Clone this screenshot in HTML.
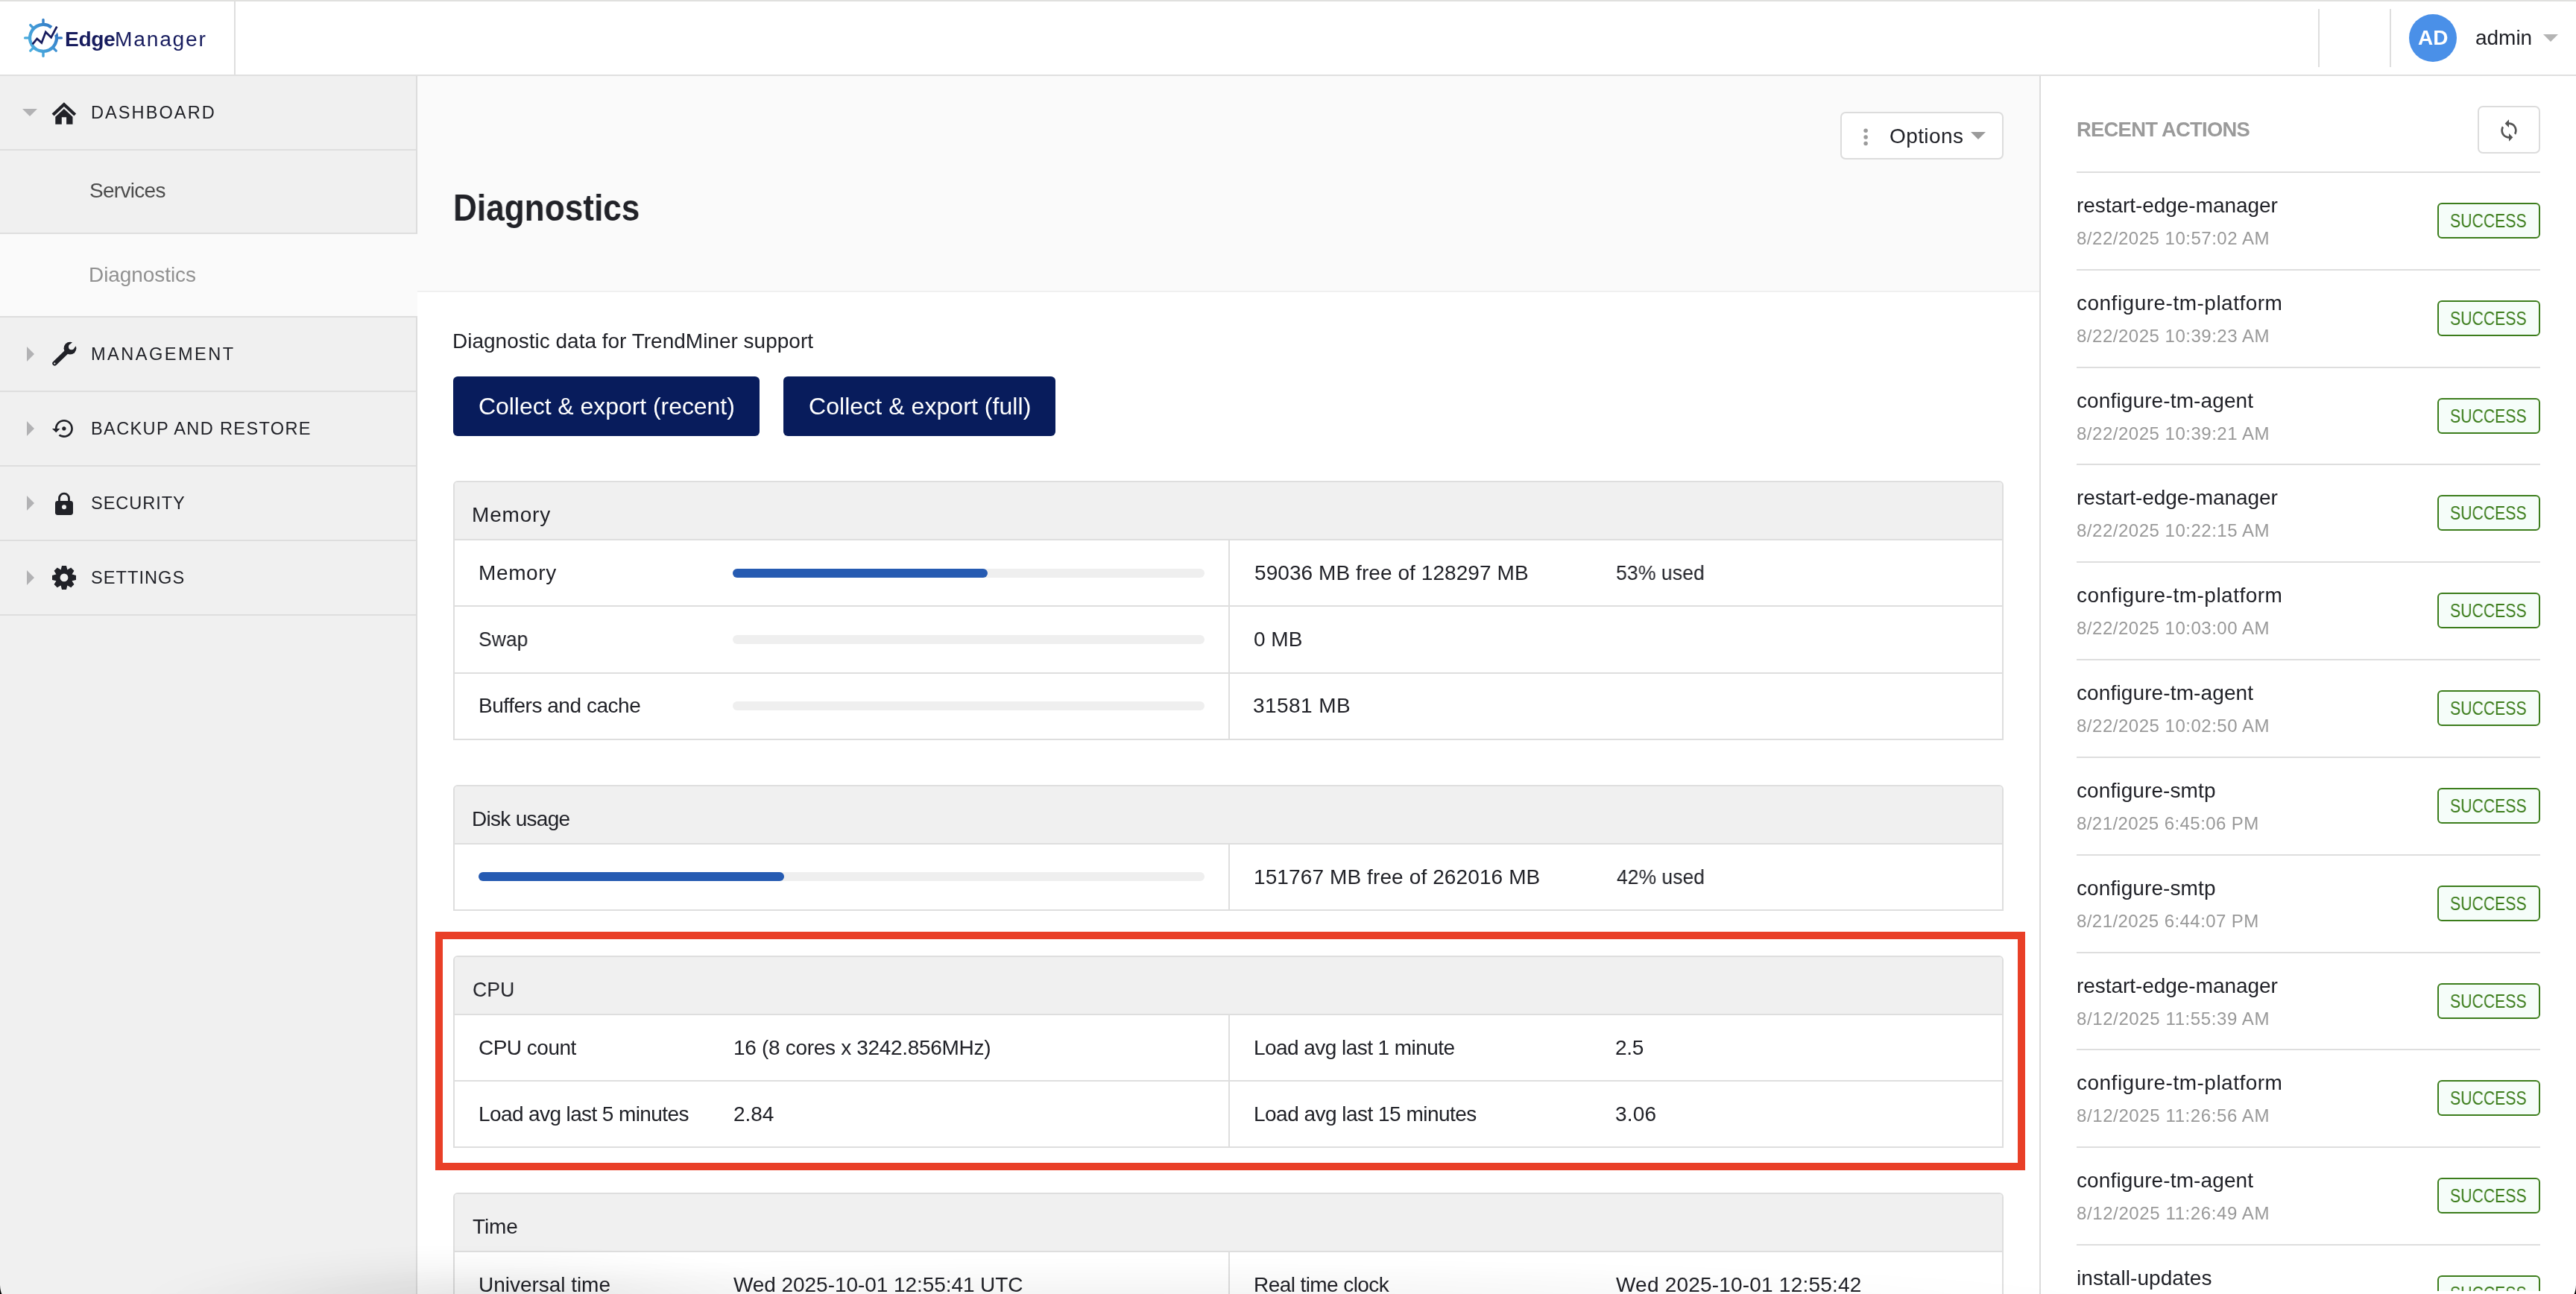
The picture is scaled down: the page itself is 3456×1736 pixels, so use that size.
<!DOCTYPE html>
<html lang="en">
<head>
<meta charset="utf-8">
<title>EdgeManager - Diagnostics</title>
<style>

html,body{margin:0;padding:0;background:#fff}
html{width:3456px;height:1736px;overflow:hidden}
body{width:3456px;height:1736px;overflow:hidden;position:relative;font-family:"Liberation Sans", sans-serif;color:#212228}
*{box-sizing:border-box}
.abs,.t,svg{position:absolute}
.t{will-change:transform;white-space:pre;line-height:1;margin:0;padding:0;font-weight:400;font-style:normal;text-decoration:none;transform-origin:0 0}
ul,li,h1,h2,h3,p{margin:0;padding:0;list-style:none}
button{margin:0;padding:0;font:inherit;color:inherit;display:block}
#topline{left:0;top:0;width:3456px;height:2px;background:#e0e0de}
#header{left:0;top:2px;width:3456px;height:100px;background:#fff;border-bottom:2px solid #e0e0e0}
.vsep{width:2px;background:#dedede}
.avatar{left:3232px;top:19px;width:64px;height:64px;border-radius:50%;background:#4a90e8}
#sidebar{left:0;top:102px;width:560px;height:1634px;background:#f0f0f0;border-right:2px solid #dcdcdc}
.nav{left:0;width:558px;border-bottom:2px solid #dedede}
.nav.active{width:560px;background:#fafafa}
#main{left:560px;top:102px;width:2176px;height:1634px;background:#fff}
#pagehead{left:0;top:0;width:2176px;height:290px;background:#fafafa;border-bottom:2px solid #f0f0f0}
.btn{background:#081c5c;border:0;border-radius:6px;height:80px;top:505px}
.obtn{background:#fff;border:2px solid #dcdcdc;border-radius:7px}
.panel{left:608px;width:2080px;border:2px solid #dedede;border-radius:6px 6px 0 0;background:#fff;overflow:hidden}
.phead{left:0;top:0;width:2076px;height:78px;background:#f0f0f0;border-bottom:2px solid #dedede}
.hline{left:0;width:2076px;height:2px;background:#dedede}
.vline{left:1038px;width:2px;background:#dedede}
.track{height:12px;border-radius:6px;background:#efefef}
.fill{height:12px;border-radius:6px;background:#265bb2;left:0;top:0}
#redbox{left:584px;top:1250px;width:2133px;height:320px;border:10px solid #e93f27}
#aside{left:2736px;top:102px;width:720px;height:1634px;background:#fff;border-left:2px solid #dcdcdc}
#clip{left:0;top:0;width:3456px;height:1732px;overflow:hidden}
.rline{left:2786px;width:622px;height:2px;background:#dedede}
.badge{left:3270px;width:138px;height:48px;border:2px solid #3c7d1c;border-radius:6px;background:#f5fdf9}
#shade{left:0;top:1636px;width:3456px;height:100px;background:radial-gradient(ellipse 460px 78px at 640px 110px,rgba(0,0,0,0.085) 0%,rgba(0,0,0,0.053) 35%,rgba(0,0,0,0.023) 65%,rgba(0,0,0,0.007) 85%,rgba(0,0,0,0.000) 100%),radial-gradient(ellipse 1400px 62px at 1500px 110px,rgba(0,0,0,0.050) 0%,rgba(0,0,0,0.031) 35%,rgba(0,0,0,0.014) 65%,rgba(0,0,0,0.004) 85%,rgba(0,0,0,0.000) 100%)}

</style>
</head>
<body>
<header>
<div class="abs" id="topline"></div>
<div class="abs" id="header"></div>
<a class="brand" title="EdgeManager">
<svg style="left:0;top:0" width="320" height="102" viewBox="0 0 320 102"><defs><linearGradient id="lg" gradientUnits="userSpaceOnUse" x1="32" y1="70" x2="84" y2="34"><stop offset="0" stop-color="#52b8e2"/><stop offset=".55" stop-color="#3f94d4"/><stop offset="1" stop-color="#2b68ba"/></linearGradient></defs><g fill="none" stroke="url(#lg)" stroke-linecap="butt"><path d="M69.02 36.79A17.9 17.9 0 1 0 75.37 46.57" stroke-width="4.3"/></g><path d="M77.01 43.22L73.65 48.70L77.81 48.12Z" fill="#2d6cbc"/><g stroke="url(#lg)" stroke-width="3.4" stroke-linecap="round" fill="none"><path d="M58.00 31.50L58.00 26.50"/><path d="M44.28 37.18L40.75 33.65"/><path d="M38.60 50.90L33.60 50.90"/><path d="M44.28 64.62L40.75 68.15"/><path d="M58.00 70.30L58.00 75.30"/><path d="M71.72 64.62L75.25 68.15"/><path d="M77.40 50.90L82.40 50.90"/></g><path d="M43.6 59.3L49.7 51.9L55.8 57.4L61.3 43.0L68.6 50.2L76.3 35.6" fill="none" stroke="#171c5e" stroke-width="2.8" stroke-linejoin="miter" stroke-miterlimit="6"/></svg>
<b class="t" style="left:86.80px;top:38.33px;font-size:28.2px;color:#171c5e;letter-spacing:-0.412px;font-weight:700">Edge</b>
<span class="t" style="left:154.40px;top:38.33px;font-size:28.2px;color:#171c5e;letter-spacing:1.773px">Manager</span>
</a>
<div class="abs vsep" style="left:314px;top:2px;height:98px"></div>
<div class="abs vsep" style="left:3110px;top:12px;height:78px"></div>
<div class="abs vsep" style="left:3206px;top:12px;height:78px"></div>
<div class="usermenu">
<div class="abs avatar"></div>
<span class="t" style="left:3244.20px;top:37.00px;font-size:28px;color:#ffffff;letter-spacing:-0.021px;font-weight:700">AD</span>
<span class="t" style="left:3320.60px;top:36.80px;font-size:28px;color:#212228;letter-spacing:-0.022px">admin</span>
<svg style="left:3412px;top:46px" width="20" height="10" viewBox="0 0 20 10"><path d="M0 0H20L10 10Z" fill="#b4b4b4"/></svg>
</div>
</header>
<nav>
<div class="abs" id="sidebar"></div>
<ul>
<li><div class="abs nav" style="top:102px;height:100px"></div><svg style="left:30px;top:146px" width="20" height="10" viewBox="0 0 20 10"><path d="M0 0H20L10 10Z" fill="#b2b2b4"/></svg><svg style="left:60px;top:130px" width="60" height="44" viewBox="60 130 60 44"><g fill="#212228"><path d="M85.9 137.2L102.2 152.6L99.3 155.4L85.9 143.0L72.5 155.4L69.6 152.6Z"/><path d="M85.9 146.0L97.5 156.7V166.8H89.1V157.2H82.8V166.8H74.3V156.7Z"/></g></svg><a class="t" style="left:121.70px;top:139.52px;font-size:23.6px;color:#212228;letter-spacing:2.036px">DASHBOARD</a>
<ul>
<li><div class="abs nav" style="top:202px;height:112px"></div><a class="t" style="left:119.90px;top:242.40px;font-size:28px;color:#4d4d4d;letter-spacing:-0.709px">Services</a></li>
<li><div class="abs nav active" style="top:314px;height:112px"></div><a class="t" style="left:119.00px;top:354.80px;font-size:28px;color:#919191;letter-spacing:-0.073px">Diagnostics</a></li>
</ul></li>
<li><div class="abs nav" style="top:426px;height:100px"></div><svg style="left:36px;top:465px" width="10" height="20" viewBox="0 0 10 20"><path d="M0 0L10 10L0 20Z" fill="#b2b2b4"/></svg><svg style="left:60px;top:452px" width="60" height="46" viewBox="60 452 60 46"><path d="M73.4 487.5L91.5 470.0" stroke="#212228" stroke-width="6.2" stroke-linecap="round" fill="none"/><circle cx="94.0" cy="467.2" r="8.4" fill="#212228"/><circle cx="95.9" cy="465.3" r="3.9" fill="#f0f0f0"/><path d="M95.9 465.3L104.5 456.7" stroke="#f0f0f0" stroke-width="7.2" fill="none"/><circle cx="73.3" cy="487.6" r="1.1" fill="#f0f0f0"/></svg><a class="t" style="left:121.70px;top:463.72px;font-size:23.6px;color:#212228;letter-spacing:2.457px">MANAGEMENT</a></li>
<li><div class="abs nav" style="top:526px;height:100px"></div><svg style="left:36px;top:565px" width="10" height="20" viewBox="0 0 10 20"><path d="M0 0L10 10L0 20Z" fill="#b2b2b4"/></svg><svg style="left:60px;top:552px" width="60" height="46" viewBox="60 552 60 46"><g transform="translate(69.9 558.9) scale(1.3333)"><path fill="#212228" d="M14 12c0-1.1-.9-2-2-2s-2 .9-2 2 .9 2 2 2 2-.9 2-2zm-2-9c-4.970 0-9 4.030-9 9H0l4 4 4-4H5c0-3.870 3.130-7 7-7s7 3.130 7 7-3.130 7-7 7c-1.510 0-2.910-.49-4.060-1.300l-1.420 1.440C8.040 20.300 9.940 21 12 21c4.970 0 9-4.030 9-9s-4.030-9-9-9z"/></g></svg><a class="t" style="left:122.20px;top:563.72px;font-size:23.6px;color:#212228;letter-spacing:1.339px">BACKUP AND RESTORE</a></li>
<li><div class="abs nav" style="top:626px;height:100px"></div><svg style="left:36px;top:665px" width="10" height="20" viewBox="0 0 10 20"><path d="M0 0L10 10L0 20Z" fill="#b2b2b4"/></svg><svg style="left:60px;top:652px" width="60" height="46" viewBox="60 652 60 46"><rect x="74" y="672" width="24" height="19" rx="3.4" fill="#212228"/><path d="M79.5 673.5V668.7A6.5 6.5 0 0 1 92.5 668.7V673.5" fill="none" stroke="#212228" stroke-width="2.8"/><circle cx="86" cy="680.2" r="3" fill="#f0f0f0"/></svg><a class="t" style="left:122.20px;top:663.72px;font-size:23.6px;color:#212228;letter-spacing:0.935px">SECURITY</a></li>
<li><div class="abs nav" style="top:726px;height:100px"></div><svg style="left:36px;top:765px" width="10" height="20" viewBox="0 0 10 20"><path d="M0 0L10 10L0 20Z" fill="#b2b2b4"/></svg><svg style="left:60px;top:752px" width="60" height="46" viewBox="60 752 60 46"><path fill="#212228" fill-rule="evenodd" d="M81.70 764.13L83.00 758.90L89.00 758.90L90.30 764.13A11.6 11.6 0 0 1 90.58 764.24L95.19 761.46L99.44 765.71L96.66 770.32A11.6 11.6 0 0 1 96.77 770.60L102.00 771.90L102.00 777.90L96.77 779.20A11.6 11.6 0 0 1 96.66 779.48L99.44 784.09L95.19 788.34L90.58 785.56A11.6 11.6 0 0 1 90.30 785.67L89.00 790.90L83.00 790.90L81.70 785.67A11.6 11.6 0 0 1 81.42 785.56L76.81 788.34L72.56 784.09L75.34 779.48A11.6 11.6 0 0 1 75.23 779.20L70.00 777.90L70.00 771.90L75.23 770.60A11.6 11.6 0 0 1 75.34 770.32L72.56 765.71L76.81 761.46L81.42 764.24A11.6 11.6 0 0 1 81.70 764.13ZM91.4 774.9A5.4 5.4 0 1 0 80.6 774.9A5.4 5.4 0 1 0 91.4 774.9Z"/></svg><a class="t" style="left:122.20px;top:763.72px;font-size:23.6px;color:#212228;letter-spacing:1.022px">SETTINGS</a></li>
</ul>
</nav>
<main>
<div class="abs" id="main"><div class="abs" id="pagehead"></div></div>
<div class="pagehead">
<button class="abs obtn" style="left:2469px;top:150px;width:219px;height:64px">
<svg style="left:28px;top:18px" width="8" height="28" viewBox="0 0 8 28"><g fill="#9b9b9b"><circle cx="4.1" cy="5.3" r="2.75"/><circle cx="4.1" cy="13.9" r="2.75"/><circle cx="4.1" cy="22.5" r="2.75"/></g></svg>
<span class="t" style="left:64.30px;top:16.80px;font-size:28px;color:#212228;letter-spacing:0.401px">Options</span>
<svg style="left:173px;top:25px" width="20" height="10" viewBox="0 0 20 10"><path d="M0 0H20L10 10Z" fill="#9b9b9b"/></svg>
</button>
<h1 class="t" style="left:607.55px;top:253.58px;font-size:50px;color:#212228;font-weight:700;transform:scaleX(0.8834)">Diagnostics</h1>
</div>
<section class="export">
<p class="t" style="left:607.20px;top:443.90px;font-size:28px;color:#212228;letter-spacing:-0.001px">Diagnostic data for TrendMiner support</p>
<button class="abs btn" style="left:608px;width:411px"><span class="t" style="left:33.60px;top:23.91px;font-size:32px;color:#ffffff;letter-spacing:-0.048px">Collect &amp; export (recent)</span></button>
<button class="abs btn" style="left:1051px;width:365px"><span class="t" style="left:33.70px;top:23.91px;font-size:32px;color:#ffffff;letter-spacing:0.062px">Collect &amp; export (full)</span></button>
</section>
<section class="abs panel" style="top:645px;height:348px"><div class="abs phead"></div><h3 class="t" style="left:22.60px;top:30.30px;font-size:28px;color:#212228;letter-spacing:0.817px">Memory</h3><div class="abs hline" style="top:165px"></div><div class="abs hline" style="top:255px"></div><div class="abs vline" style="top:78px;height:266px"></div><div class="abs track" style="left:373px;top:116px;width:633px"><div class="abs fill" style="width:341.7px"></div></div><div class="abs track" style="left:373px;top:205px;width:633px"></div><div class="abs track" style="left:373px;top:294px;width:633px"></div><span class="t" style="left:31.90px;top:108.20px;font-size:28px;color:#212228;letter-spacing:0.617px">Memory</span><span class="t" style="left:1072.60px;top:108.20px;font-size:28px;color:#212228;letter-spacing:0.071px">59036 MB free of 128297 MB</span><span class="t" style="left:1557.95px;top:108.20px;font-size:28px;color:#212228;transform:scaleX(0.9536)">53% used</span><span class="t" style="left:31.75px;top:197.20px;font-size:28px;color:#212228;transform:scaleX(0.9464)">Swap</span><span class="t" style="left:1071.90px;top:197.20px;font-size:28px;color:#212228;letter-spacing:0.008px">0 MB</span><span class="t" style="left:32.20px;top:286.40px;font-size:28px;color:#212228;letter-spacing:-0.464px">Buffers and cache</span><span class="t" style="left:1071.40px;top:286.40px;font-size:28px;color:#212228;letter-spacing:0.419px">31581 MB</span></section>
<section class="abs panel" style="top:1053px;height:169px"><div class="abs phead"></div><h3 class="t" style="left:23.00px;top:30.30px;font-size:28px;color:#212228;letter-spacing:-0.715px">Disk usage</h3><div class="abs vline" style="top:78px;height:87px"></div><div class="abs track" style="left:32px;top:115px;width:974px"><div class="abs fill" style="width:409.8px"></div></div><span class="t" style="left:1071.70px;top:108.30px;font-size:28px;color:#212228;letter-spacing:0.112px">151767 MB free of 262016 MB</span><span class="t" style="left:1558.80px;top:108.30px;font-size:28px;color:#212228;transform:scaleX(0.9466)">42% used</span></section>
<div class="abs" id="redbox"></div>
<section class="abs panel" style="top:1282px;height:258px"><div class="abs phead"></div><h3 class="t" style="left:23.75px;top:30.10px;font-size:28px;color:#212228;transform:scaleX(0.9508)">CPU</h3><div class="abs hline" style="top:165px"></div><div class="abs vline" style="top:78px;height:176px"></div><span class="t" style="left:31.90px;top:108.20px;font-size:28px;color:#212228;letter-spacing:-0.514px">CPU count</span><span class="t" style="left:374.00px;top:108.20px;font-size:28px;color:#212228;letter-spacing:-0.310px">16 (8 cores x 3242.856MHz)</span><span class="t" style="left:1072.10px;top:108.20px;font-size:28px;color:#212228;letter-spacing:-0.555px">Load avg last 1 minute</span><span class="t" style="left:1557.40px;top:108.20px;font-size:28px;color:#212228;letter-spacing:-0.276px">2.5</span><span class="t" style="left:32.20px;top:197.10px;font-size:28px;color:#212228;letter-spacing:-0.606px">Load avg last 5 minutes</span><span class="t" style="left:373.80px;top:197.10px;font-size:28px;color:#212228;letter-spacing:-0.075px">2.84</span><span class="t" style="left:1072.10px;top:197.10px;font-size:28px;color:#212228;letter-spacing:-0.522px">Load avg last 15 minutes</span><span class="t" style="left:1557.30px;top:197.10px;font-size:28px;color:#212228;letter-spacing:0.225px">3.06</span></section>
<section class="abs panel" style="top:1600px;height:136px;border-bottom:0"><div class="abs phead"></div><h3 class="t" style="left:24.20px;top:30.10px;font-size:28px;color:#212228;letter-spacing:-0.103px">Time</h3><div class="abs vline" style="top:78px;height:58px"></div><span class="t" style="left:31.90px;top:107.60px;font-size:28px;color:#212228;letter-spacing:-0.031px">Universal time</span><span class="t" style="left:374.10px;top:107.60px;font-size:28px;color:#212228;letter-spacing:-0.063px">Wed 2025-10-01 12:55:41 UTC</span><span class="t" style="left:1072.10px;top:107.60px;font-size:28px;color:#212228;letter-spacing:-0.574px">Real time clock</span><span class="t" style="left:1558.30px;top:107.60px;font-size:28px;color:#212228;letter-spacing:0.201px">Wed 2025-10-01 12:55:42</span></section>
</main>
<aside>
<div class="abs" id="aside"></div>
<h2 class="t" style="left:2785.80px;top:160.31px;font-size:27.4px;color:#9a9a9a;letter-spacing:-0.739px;font-weight:700">RECENT ACTIONS</h2>
<button class="abs obtn" style="left:3324px;top:142px;width:84px;height:64px"><svg style="left:24px;top:14.5px" width="32" height="32" viewBox="0 0 24 24"><path fill="#555" d="M12 4V1L8 5l4 4V6c3.31 0 6 2.690 6 6 0 1.010-.25 1.970-.7 2.800l1.460 1.460C19.540 15.030 20 13.570 20 12c0-4.420-3.580-8-8-8zm0 14c-3.310 0-6-2.690-6-6 0-1.010.25-1.970.7-2.800L5.240 7.740C4.460 8.970 4 10.430 4 12c0 4.420 3.580 8 8 8v3l4-4-4-4v3z"/></svg></button>
<ul class="abs" id="clip">
<li><div class="abs rline" style="top:230px"></div><strong class="t" style="left:2786.20px;top:261.50px;font-size:28px;color:#212228;letter-spacing:-0.051px">restart-edge-manager</strong><time class="t" style="left:2786.10px;top:308.38px;font-size:24px;color:#999999;letter-spacing:0.513px">8/22/2025 10:57:02 AM</time><span class="abs badge" style="top:272px"><span class="t" style="left:15.35px;top:10.24px;font-size:25px;color:#3c7d1c;transform:scaleX(0.8491)">SUCCESS</span></span></li>
<li><div class="abs rline" style="top:361px"></div><strong class="t" style="left:2786.20px;top:392.50px;font-size:28px;color:#212228;letter-spacing:0.492px">configure-tm-platform</strong><time class="t" style="left:2786.10px;top:439.38px;font-size:24px;color:#999999;letter-spacing:0.513px">8/22/2025 10:39:23 AM</time><span class="abs badge" style="top:403px"><span class="t" style="left:15.35px;top:10.24px;font-size:25px;color:#3c7d1c;transform:scaleX(0.8491)">SUCCESS</span></span></li>
<li><div class="abs rline" style="top:492px"></div><strong class="t" style="left:2786.20px;top:523.50px;font-size:28px;color:#212228;letter-spacing:0.122px">configure-tm-agent</strong><time class="t" style="left:2786.10px;top:570.38px;font-size:24px;color:#999999;letter-spacing:0.513px">8/22/2025 10:39:21 AM</time><span class="abs badge" style="top:534px"><span class="t" style="left:15.35px;top:10.24px;font-size:25px;color:#3c7d1c;transform:scaleX(0.8491)">SUCCESS</span></span></li>
<li><div class="abs rline" style="top:622px"></div><strong class="t" style="left:2786.20px;top:653.50px;font-size:28px;color:#212228;letter-spacing:-0.051px">restart-edge-manager</strong><time class="t" style="left:2786.10px;top:700.38px;font-size:24px;color:#999999;letter-spacing:0.513px">8/22/2025 10:22:15 AM</time><span class="abs badge" style="top:664px"><span class="t" style="left:15.35px;top:10.24px;font-size:25px;color:#3c7d1c;transform:scaleX(0.8491)">SUCCESS</span></span></li>
<li><div class="abs rline" style="top:753px"></div><strong class="t" style="left:2786.20px;top:784.50px;font-size:28px;color:#212228;letter-spacing:0.492px">configure-tm-platform</strong><time class="t" style="left:2786.10px;top:831.38px;font-size:24px;color:#999999;letter-spacing:0.513px">8/22/2025 10:03:00 AM</time><span class="abs badge" style="top:795px"><span class="t" style="left:15.35px;top:10.24px;font-size:25px;color:#3c7d1c;transform:scaleX(0.8491)">SUCCESS</span></span></li>
<li><div class="abs rline" style="top:884px"></div><strong class="t" style="left:2786.20px;top:915.50px;font-size:28px;color:#212228;letter-spacing:0.122px">configure-tm-agent</strong><time class="t" style="left:2786.10px;top:962.38px;font-size:24px;color:#999999;letter-spacing:0.513px">8/22/2025 10:02:50 AM</time><span class="abs badge" style="top:926px"><span class="t" style="left:15.35px;top:10.24px;font-size:25px;color:#3c7d1c;transform:scaleX(0.8491)">SUCCESS</span></span></li>
<li><div class="abs rline" style="top:1015px"></div><strong class="t" style="left:2786.20px;top:1046.50px;font-size:28px;color:#212228;letter-spacing:0.099px">configure-smtp</strong><time class="t" style="left:2786.10px;top:1093.38px;font-size:24px;color:#999999;letter-spacing:0.427px">8/21/2025 6:45:06 PM</time><span class="abs badge" style="top:1057px"><span class="t" style="left:15.35px;top:10.24px;font-size:25px;color:#3c7d1c;transform:scaleX(0.8491)">SUCCESS</span></span></li>
<li><div class="abs rline" style="top:1146px"></div><strong class="t" style="left:2786.20px;top:1177.50px;font-size:28px;color:#212228;letter-spacing:0.099px">configure-smtp</strong><time class="t" style="left:2786.10px;top:1224.38px;font-size:24px;color:#999999;letter-spacing:0.427px">8/21/2025 6:44:07 PM</time><span class="abs badge" style="top:1188px"><span class="t" style="left:15.35px;top:10.24px;font-size:25px;color:#3c7d1c;transform:scaleX(0.8491)">SUCCESS</span></span></li>
<li><div class="abs rline" style="top:1277px"></div><strong class="t" style="left:2786.20px;top:1308.50px;font-size:28px;color:#212228;letter-spacing:-0.051px">restart-edge-manager</strong><time class="t" style="left:2786.10px;top:1355.38px;font-size:24px;color:#999999;letter-spacing:0.602px">8/12/2025 11:55:39 AM</time><span class="abs badge" style="top:1319px"><span class="t" style="left:15.35px;top:10.24px;font-size:25px;color:#3c7d1c;transform:scaleX(0.8491)">SUCCESS</span></span></li>
<li><div class="abs rline" style="top:1407px"></div><strong class="t" style="left:2786.20px;top:1438.50px;font-size:28px;color:#212228;letter-spacing:0.492px">configure-tm-platform</strong><time class="t" style="left:2786.10px;top:1485.38px;font-size:24px;color:#999999;letter-spacing:0.602px">8/12/2025 11:26:56 AM</time><span class="abs badge" style="top:1449px"><span class="t" style="left:15.35px;top:10.24px;font-size:25px;color:#3c7d1c;transform:scaleX(0.8491)">SUCCESS</span></span></li>
<li><div class="abs rline" style="top:1538px"></div><strong class="t" style="left:2786.20px;top:1569.50px;font-size:28px;color:#212228;letter-spacing:0.122px">configure-tm-agent</strong><time class="t" style="left:2786.10px;top:1616.38px;font-size:24px;color:#999999;letter-spacing:0.602px">8/12/2025 11:26:49 AM</time><span class="abs badge" style="top:1580px"><span class="t" style="left:15.35px;top:10.24px;font-size:25px;color:#3c7d1c;transform:scaleX(0.8491)">SUCCESS</span></span></li>
<li><div class="abs rline" style="top:1669px"></div><strong class="t" style="left:2786.20px;top:1700.50px;font-size:28px;color:#212228;letter-spacing:0.068px">install-updates</strong><time class="t" style="left:2786.10px;top:1747.38px;font-size:24px;color:#999999;letter-spacing:0.513px">8/12/2025 10:14:32 AM</time><span class="abs badge" style="top:1711px"><span class="t" style="left:15.35px;top:10.24px;font-size:25px;color:#3c7d1c;transform:scaleX(0.8491)">SUCCESS</span></span></li>
</ul>
</aside>
<div class="abs" id="shade"></div>
<svg style="left:0;top:1720px" width="6" height="16" viewBox="0 0 6 16"><path d="M0 4Q.3 11.5 2.4 16H0Z" fill="#000"/></svg>
<svg style="left:3450px;top:1720px" width="6" height="16" viewBox="0 0 6 16"><path d="M6 4Q5.7 11.5 3.6 16H6Z" fill="#000"/></svg>
</body>
</html>
